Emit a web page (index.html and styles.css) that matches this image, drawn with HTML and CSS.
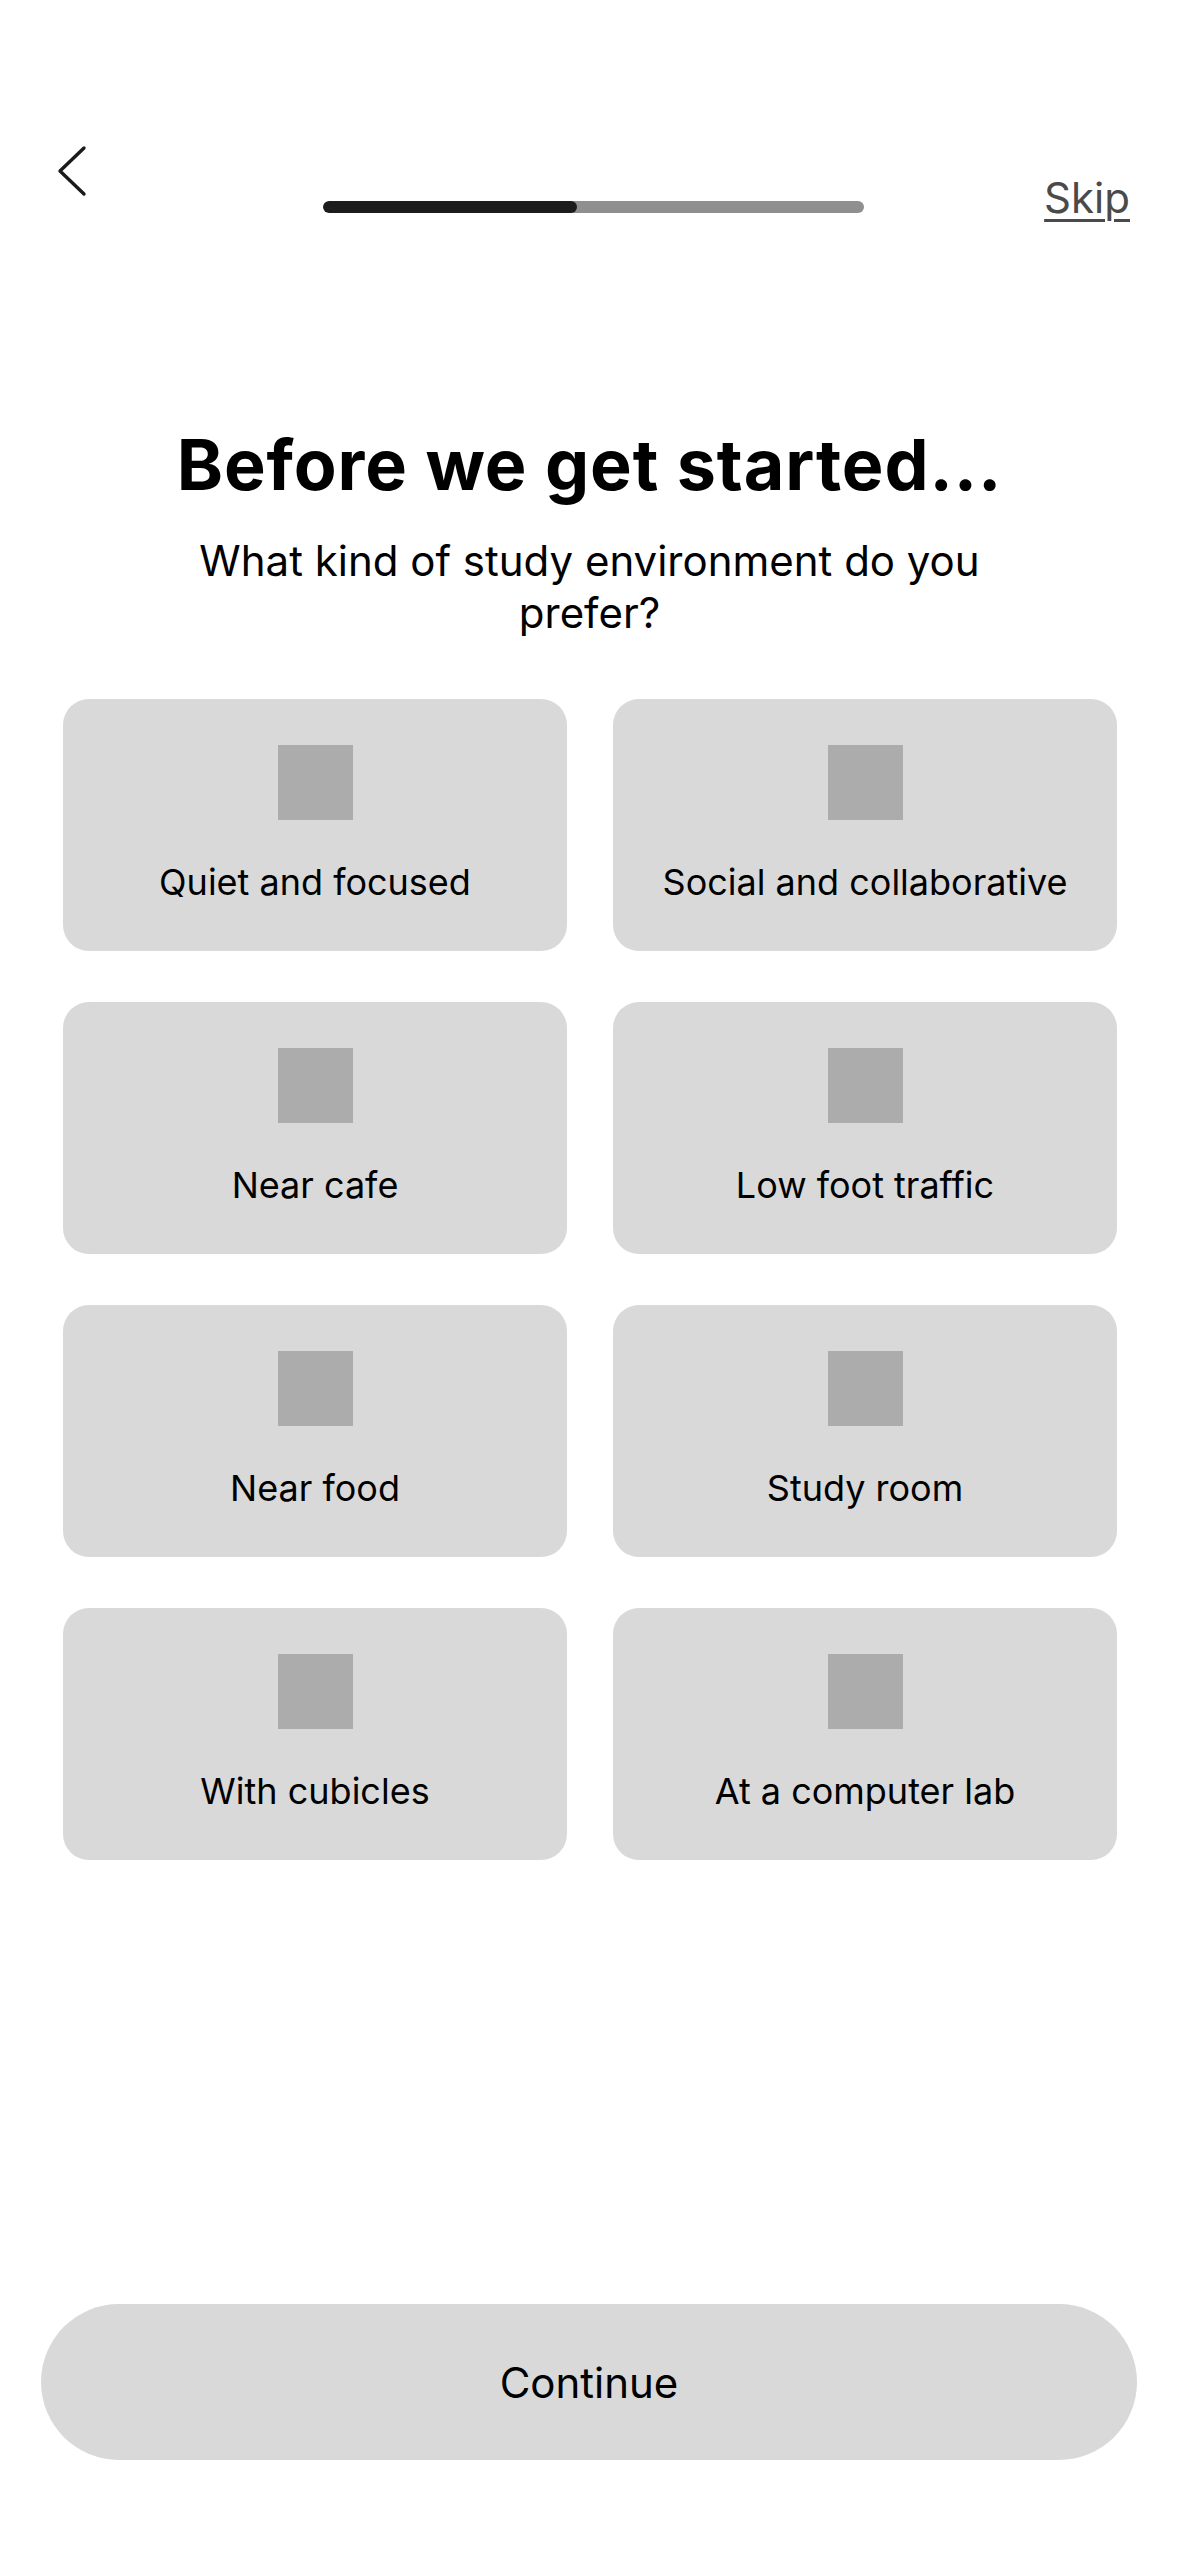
FILE: index.html
```html
<!DOCTYPE html>
<html lang="en">
<head>
<meta charset="utf-8">
<title>Before we get started</title>
<link rel="stylesheet" href="styles.css">
</head>
<body>
<div class="page">
  <header class="topbar">
    <button class="back" aria-label="Back">
      <svg width="30" height="54" viewBox="0 0 30 54">
        <polyline points="27,4 3,27 27,50" fill="none" stroke="#1a1a1a" stroke-width="3.4" stroke-linecap="round" stroke-linejoin="round"/>
      </svg>
    </button>
    <div class="progress"><div class="progress-fill"></div></div>
    <a class="skip" href="#">Skip</a>
  </header>

  <main class="content">
    <h1 class="title">Before we get started...</h1>
    <p class="subtitle">What kind of study environment do you prefer?</p>

    <div class="options">
      <div class="option"><span class="option-icon"></span><span class="option-label">Quiet and focused</span></div>
      <div class="option"><span class="option-icon"></span><span class="option-label">Social and collaborative</span></div>
      <div class="option"><span class="option-icon"></span><span class="option-label">Near cafe</span></div>
      <div class="option"><span class="option-icon"></span><span class="option-label">Low foot traffic</span></div>
      <div class="option"><span class="option-icon"></span><span class="option-label">Near food</span></div>
      <div class="option"><span class="option-icon"></span><span class="option-label">Study room</span></div>
      <div class="option"><span class="option-icon"></span><span class="option-label">With cubicles</span></div>
      <div class="option"><span class="option-icon"></span><span class="option-label">At a computer lab</span></div>
    </div>
  </main>

  <footer class="footer">
    <button class="continue">Continue</button>
  </footer>
</div>
</body>
</html>
```

FILE: styles.css
```css
* { box-sizing: border-box; }

html, body {
  margin: 0;
  padding: 0;
  background: #ffffff;
}

body {
  font-family: Inter, "Noto Sans", "Liberation Sans", sans-serif;
  color: #000;
}

.page {
  width: 1179px;
  min-height: 2556px;
  display: flex;
  flex-direction: column;
}

.topbar {
  display: grid;
  grid-template-columns: 1fr 541px 1fr;
  align-items: start;
  padding: 144px 49px 0 57px;
}

.back {
  justify-self: start;
  background: none;
  border: 0;
  padding: 0;
  margin: 0;
  width: 30px;
  height: 54px;
  display: block;
}

.back svg { display: block; }

.progress {
  margin-top: 57px;
  height: 12px;
  border-radius: 6px;
  background: #8f8f8f;
  overflow: hidden;
}

.progress-fill {
  width: 47%;
  height: 100%;
  background: #1c1c1c;
  border-radius: 6px;
}

.skip {
  justify-self: end;
  margin-top: 33px;
  font-size: 42px;
  line-height: 42px;
  color: #4a4a4a;
  text-decoration: underline;
  text-decoration-thickness: 3px;
  text-underline-offset: 6px;
}

.content {
  display: flex;
  flex-direction: column;
  align-items: center;
}

.title {
  margin: 204px 0 0;
  font-size: 70px;
  line-height: 84px;
  font-weight: 700;
  letter-spacing: 0.9px;
  text-align: center;
}

.subtitle {
  margin: 28px 0 0;
  width: 880px;
  font-size: 42px;
  line-height: 52px;
  letter-spacing: 0;
  text-align: center;
}

.options {
  margin-top: 60px;
  width: 100%;
  padding: 0 62px 0 63px;
  display: grid;
  grid-template-columns: 1fr 1fr;
  column-gap: 46px;
  row-gap: 51px;
}

.option {
  height: 252px;
  border-radius: 26px;
  background: #d9d9d9;
  display: flex;
  flex-direction: column;
  align-items: center;
  padding-top: 46px;
}

.option-icon {
  width: 75px;
  height: 75px;
  background: #acacac;
}

.option-label {
  margin-top: 41px;
  font-size: 36px;
  line-height: 43px;
}

.footer {
  margin-top: auto;
  padding: 0 42px 96px 41px;
}

.continue {
  width: 100%;
  height: 156px;
  border: 0;
  border-radius: 78px;
  background: #d9d9d9;
  font-family: Inter, "Noto Sans", "Liberation Sans", sans-serif;
  font-size: 42px;
  color: #000;
}
```
